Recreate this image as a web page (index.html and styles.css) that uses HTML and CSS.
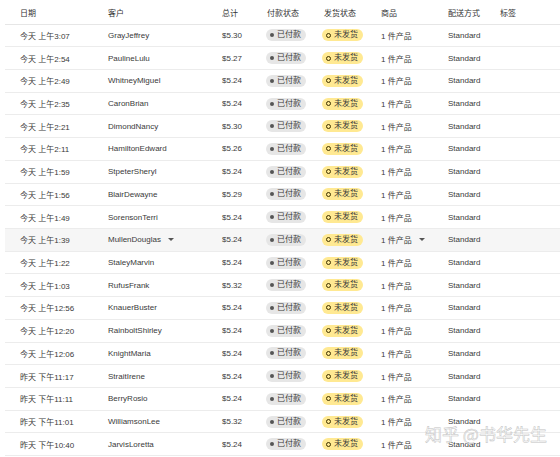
FILE: index.html
```html
<!DOCTYPE html>
<html lang="zh-CN">
<head>
<meta charset="utf-8">
<title>订单</title>
<link rel="stylesheet" href="styles.css">
</head>
<body>
<div class="table">
  <div class="row head">
    <div>日期</div><div>客户</div><div>总计</div><div>付款状态</div><div>发货状态</div><div>商品</div><div>配送方式</div><div>标签</div>
  </div>
  <div class="row"><div>今天 上午3:07</div><div>GrayJeffrey</div><div>$5.30</div><div><span class="pill paid"><i class="dot"></i>已付款</span></div><div><span class="pill unf"><i class="ring"></i>未发货</span></div><div>1 件产品</div><div>Standard</div><div></div></div>
  <div class="row"><div>今天 上午2:54</div><div>PaulineLulu</div><div>$5.27</div><div><span class="pill paid"><i class="dot"></i>已付款</span></div><div><span class="pill unf"><i class="ring"></i>未发货</span></div><div>1 件产品</div><div>Standard</div><div></div></div>
  <div class="row"><div>今天 上午2:49</div><div>WhitneyMiguel</div><div>$5.24</div><div><span class="pill paid"><i class="dot"></i>已付款</span></div><div><span class="pill unf"><i class="ring"></i>未发货</span></div><div>1 件产品</div><div>Standard</div><div></div></div>
  <div class="row"><div>今天 上午2:35</div><div>CaronBrian</div><div>$5.24</div><div><span class="pill paid"><i class="dot"></i>已付款</span></div><div><span class="pill unf"><i class="ring"></i>未发货</span></div><div>1 件产品</div><div>Standard</div><div></div></div>
  <div class="row"><div>今天 上午2:21</div><div>DimondNancy</div><div>$5.30</div><div><span class="pill paid"><i class="dot"></i>已付款</span></div><div><span class="pill unf"><i class="ring"></i>未发货</span></div><div>1 件产品</div><div>Standard</div><div></div></div>
  <div class="row"><div>今天 上午2:11</div><div>HamiltonEdward</div><div>$5.26</div><div><span class="pill paid"><i class="dot"></i>已付款</span></div><div><span class="pill unf"><i class="ring"></i>未发货</span></div><div>1 件产品</div><div>Standard</div><div></div></div>
  <div class="row"><div>今天 上午1:59</div><div>StpeterSheryl</div><div>$5.24</div><div><span class="pill paid"><i class="dot"></i>已付款</span></div><div><span class="pill unf"><i class="ring"></i>未发货</span></div><div>1 件产品</div><div>Standard</div><div></div></div>
  <div class="row"><div>今天 上午1:56</div><div>BlairDewayne</div><div>$5.29</div><div><span class="pill paid"><i class="dot"></i>已付款</span></div><div><span class="pill unf"><i class="ring"></i>未发货</span></div><div>1 件产品</div><div>Standard</div><div></div></div>
  <div class="row"><div>今天 上午1:49</div><div>SorensonTerri</div><div>$5.24</div><div><span class="pill paid"><i class="dot"></i>已付款</span></div><div><span class="pill unf"><i class="ring"></i>未发货</span></div><div>1 件产品</div><div>Standard</div><div></div></div>
  <div class="row hover"><div>今天 上午1:39</div><div class="withcaret">MullenDouglas<i class="caret"></i></div><div>$5.24</div><div><span class="pill paid"><i class="dot"></i>已付款</span></div><div><span class="pill unf"><i class="ring"></i>未发货</span></div><div class="withcaret">1 件产品<i class="caret"></i></div><div>Standard</div><div></div></div>
  <div class="row"><div>今天 上午1:22</div><div>StaleyMarvin</div><div>$5.24</div><div><span class="pill paid"><i class="dot"></i>已付款</span></div><div><span class="pill unf"><i class="ring"></i>未发货</span></div><div>1 件产品</div><div>Standard</div><div></div></div>
  <div class="row"><div>今天 上午1:03</div><div>RufusFrank</div><div>$5.32</div><div><span class="pill paid"><i class="dot"></i>已付款</span></div><div><span class="pill unf"><i class="ring"></i>未发货</span></div><div>1 件产品</div><div>Standard</div><div></div></div>
  <div class="row"><div>今天 上午12:56</div><div>KnauerBuster</div><div>$5.24</div><div><span class="pill paid"><i class="dot"></i>已付款</span></div><div><span class="pill unf"><i class="ring"></i>未发货</span></div><div>1 件产品</div><div>Standard</div><div></div></div>
  <div class="row"><div>今天 上午12:20</div><div>RainboltShirley</div><div>$5.24</div><div><span class="pill paid"><i class="dot"></i>已付款</span></div><div><span class="pill unf"><i class="ring"></i>未发货</span></div><div>1 件产品</div><div>Standard</div><div></div></div>
  <div class="row"><div>今天 上午12:06</div><div>KnightMaria</div><div>$5.24</div><div><span class="pill paid"><i class="dot"></i>已付款</span></div><div><span class="pill unf"><i class="ring"></i>未发货</span></div><div>1 件产品</div><div>Standard</div><div></div></div>
  <div class="row"><div>昨天 下午11:17</div><div>StraitIrene</div><div>$5.24</div><div><span class="pill paid"><i class="dot"></i>已付款</span></div><div><span class="pill unf"><i class="ring"></i>未发货</span></div><div>1 件产品</div><div>Standard</div><div></div></div>
  <div class="row"><div>昨天 下午11:11</div><div>BerryRosio</div><div>$5.24</div><div><span class="pill paid"><i class="dot"></i>已付款</span></div><div><span class="pill unf"><i class="ring"></i>未发货</span></div><div>1 件产品</div><div>Standard</div><div></div></div>
  <div class="row"><div>昨天 下午11:01</div><div>WilliamsonLee</div><div>$5.32</div><div><span class="pill paid"><i class="dot"></i>已付款</span></div><div><span class="pill unf"><i class="ring"></i>未发货</span></div><div>1 件产品</div><div>Standard</div><div></div></div>
  <div class="row"><div>昨天 下午10:40</div><div>JarvisLoretta</div><div>$5.24</div><div><span class="pill paid"><i class="dot"></i>已付款</span></div><div><span class="pill unf"><i class="ring"></i>未发货</span></div><div>1 件产品</div><div>Standard</div><div></div></div>
</div>
<div class="watermark">知乎 @书华先生</div>
</body>
</html>
```

FILE: styles.css
```css
html, body {
  margin: 0;
  padding: 0;
  background: #ffffff;
}
body {
  width: 560px;
  height: 457px;
  overflow: hidden;
  position: relative;
  font-family: "Liberation Sans", "Noto Sans CJK SC", sans-serif;
  font-size: 8px;
  color: #3a3a3a;
}
.table {
  margin-left: 5px;
}
.row {
  display: grid;
  grid-template-columns: 88px 114px 45px 57px 57px 67px 52px 1fr;
  padding-left: 15px;
  height: 22.72px;
  align-items: center;
  border-bottom: 1px solid #ececec;
  box-sizing: border-box;
  white-space: nowrap;
}
.row.head {
  height: 24.5px;
  padding-top: 2px;
  border-bottom: 1px solid #e6e6e6;
  color: #333;
}
.row.hover {
  background: #f6f6f6;
}
.withcaret {
  display: flex;
  align-items: center;
}
.caret {
  display: inline-block;
  width: 0;
  height: 0;
  margin-left: 7px;
  border-left: 3px solid transparent;
  border-right: 3px solid transparent;
  border-top: 3px solid #555;
}
.pill {
  display: inline-flex;
  align-items: center;
  height: 12px;
  padding: 0 5px 0 4px;
  border-radius: 6px;
  line-height: 12px;
  color: #3a3a3a;
}
.pill.paid {
  background: #e6e6e6;
  margin-left: -1px;
}
.pill.unf {
  background: #ffe992;
  margin-left: -2px;
}
.dot {
  width: 4px;
  height: 4px;
  border-radius: 50%;
  background: #555;
  margin-right: 3px;
}
.ring {
  width: 3px;
  height: 3px;
  border-radius: 50%;
  border: 1.2px solid #3d3000;
  margin-right: 3px;
}
.watermark {
  position: absolute;
  left: 425px;
  top: 423px;
  font-family: "Noto Sans CJK SC", sans-serif;
  font-size: 17px;
  line-height: 22px;
  color: rgba(255, 255, 255, 0.7);
  -webkit-text-stroke: 0.5px #c2c2c2;
  white-space: nowrap;
}
```
